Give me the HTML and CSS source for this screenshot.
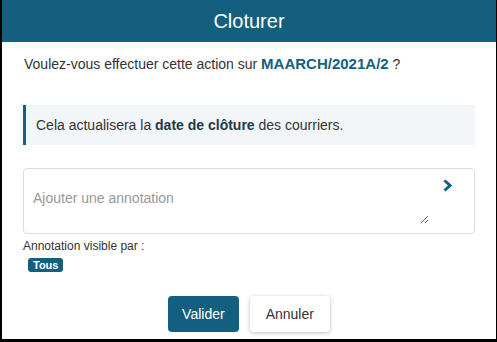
FILE: index.html
```html
<!DOCTYPE html>
<html lang="fr">
<head>
  <meta charset="UTF-8" />
  <meta name="viewport" content="width=device-width, initial-scale=1.0"/>
  <title>Cloturer</title>
  <link rel="stylesheet" href="styles.css">
</head>
<body>

  <div class="dialog">
    <div class="dialog-title">Cloturer</div>

    <div class="dialog-body">
      <p class="question">Voulez-vous effectuer cette action sur <b class="ref">MAARCH/2021A/2</b> ?</p>

      <div class="info">Cela actualisera la <b>date de clôture</b> des courriers.</div>

      <div class="note-box">
        <textarea class="note" placeholder="Ajouter une annotation"></textarea>
        <button class="note-btn" type="button">
          <svg width="9" height="13" viewBox="0 0 9 13">
            <polyline points="1.5,1.5 7,6.5 1.5,11.5" fill="none" stroke="#135f7f" stroke-width="3"/>
          </svg>
        </button>
      </div>

      <div class="visible-label">Annotation visible par :</div>
      <span class="tag">Tous</span>
    </div>

    <div class="actions">
      <button class="btn btn-primary">Valider</button>
      <button class="btn btn-secondary">Annuler</button>
    </div>
  </div>

</body>
</html>
```

FILE: styles.css
```css
body {
  margin: 0;
  background-color: #000;
  font-family: "Liberation Sans", Arial, sans-serif;
  color: #333;
}

.dialog {
  width: 494px;
  height: 339px;
  margin-left: 2px;
  background-color: white;
  display: flex;
  flex-direction: column;
}

.dialog-title {
  height: 42px;
  line-height: 42px;
  background-color: #135f7f;
  color: white;
  font-size: 20px;
  text-align: center;
}

.dialog-body {
  padding: 0 21px;
}

.question {
  margin: 12px 0 0 1px;
  font-size: 14px;
  line-height: 20px;
}

.ref {
  color: #135f7f;
  font-size: 15px;
}

.info {
  margin-top: 31px;
  height: 40px;
  line-height: 40px;
  padding-left: 10px;
  border-left: 3px solid #135f7f;
  background-color: #f3f6f9;
  font-size: 14px;
}

.info b {
  color: #1d3a4a;
}

.note-box {
  margin-top: 23px;
  height: 64px;
  border: 1px solid #ddd;
  border-radius: 4px;
  display: flex;
  align-items: flex-start;
  padding: 0 0 0 9px;
}

.note {
  flex: 1;
  box-sizing: border-box;
  height: 46px;
  margin-top: 9px;
  border: none;
  outline: none;
  resize: vertical;
  font-family: "Liberation Sans", Arial, sans-serif;
  font-size: 14px;
  line-height: 20px;
  padding: 10px 0 0 0;
  color: #333;
}

.note::placeholder {
  color: #999;
}

.note-btn {
  width: 45px;
  height: 36px;
  border: none;
  background: none;
  padding: 0 0 0 14px;
  text-align: left;
  cursor: pointer;
}

.visible-label {
  margin-top: 5px;
  font-size: 12px;
  line-height: 14px;
  color: #333;
}

.tag {
  display: inline-block;
  margin: 5px 0 0 5px;
  padding: 0 5px;
  height: 14px;
  line-height: 14px;
  background-color: #135f7f;
  color: white;
  font-size: 11px;
  font-weight: bold;
  border-radius: 3px;
}

.actions {
  display: flex;
  justify-content: center;
  gap: 11px;
  margin-top: 23px;
}

.btn {
  height: 36px;
  padding: 0 14px;
  border: none;
  border-radius: 4px;
  font-family: "Liberation Sans", Arial, sans-serif;
  font-size: 14px;
  cursor: pointer;
}

.btn-primary {
  background-color: #135f7f;
  color: white;
  font-weight: 500;
}

.btn-secondary {
  background-color: white;
  color: #333;
  padding: 0 16px;
  box-shadow: 0 1px 4px rgba(0, 0, 0, 0.25);
}
```
